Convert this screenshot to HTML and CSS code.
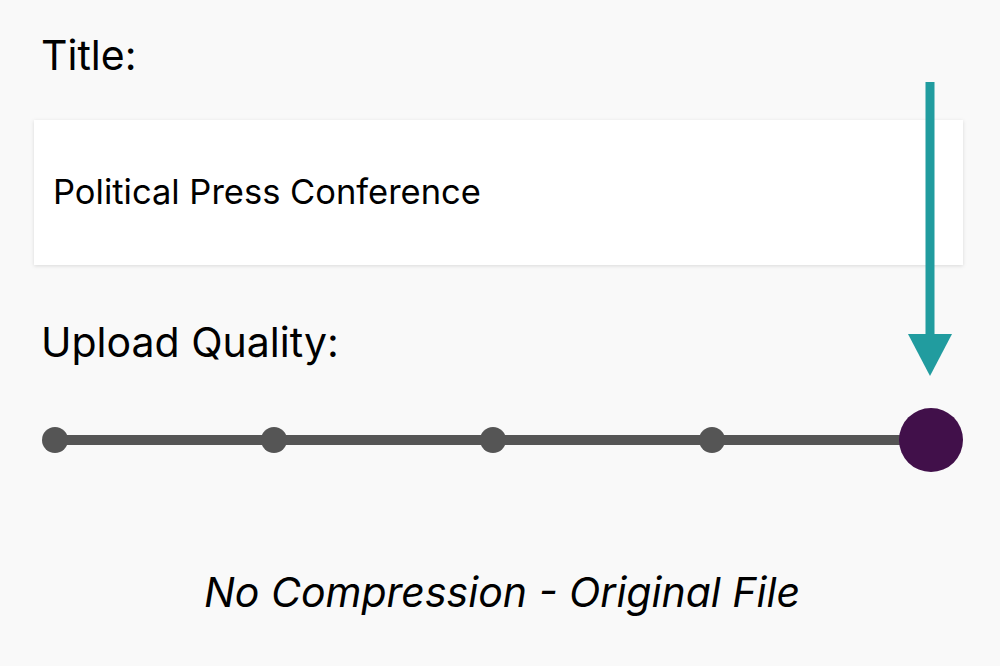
FILE: index.html
```html
<!DOCTYPE html>
<html>
<head>
<meta charset="utf-8">
<link rel="stylesheet" href="styles.css">
</head>
<body>
<div class="screen">
  <div class="label title-label">Title:</div>
  <div class="field">Political Press Conference</div>
  <div class="label quality-label">Upload Quality:</div>
  <div class="slider">
    <div class="track"></div>
    <span class="stop"></span>
    <span class="stop"></span>
    <span class="stop"></span>
    <span class="stop"></span>
    <span class="stop last"><span class="thumb"></span></span>
  </div>
  <div class="caption">No Compression - Original File</div>
  <svg class="arrow" width="50" height="300" viewBox="0 0 50 300">
    <rect x="20.5" y="0" width="9" height="254" fill="#219c9f"/>
    <polygon points="3,252 47,252 25,294" fill="#219c9f"/>
  </svg>
</div>
</body>
</html>
```
FILE: styles.css
```css
html, body {
  margin: 0;
  padding: 0;
  background: #f9f9f9;
}
.screen {
  position: relative;
  width: 1000px;
  height: 666px;
  overflow: hidden;
  font-family: Inter, "Noto Sans", sans-serif;
  color: #000;
  display: flex;
  flex-direction: column;
}
.label {
  font-size: 41px;
  line-height: 48px;
  padding-left: 41px;
}
.title-label {
  margin-top: 31px;
}
.field {
  margin: 41px 37px 0 34px;
  height: 145px;
  box-sizing: border-box;
  background: #fff;
  box-shadow: 0 1px 4px rgba(0,0,0,0.13);
  display: flex;
  align-items: center;
  padding: 0 0 3px 19px;
  font-size: 34.5px;
}
.quality-label {
  margin-top: 53px;
}
.slider {
  position: relative;
  margin: 42px 56px 0 42px;
  height: 64px;
  display: flex;
  align-items: center;
  justify-content: space-between;
}
.track {
  position: absolute;
  left: 13px;
  right: 13px;
  top: 27px;
  height: 10px;
  background: #555555;
}
.stop {
  position: relative;
  width: 26px;
  height: 26px;
  border-radius: 50%;
  background: #555555;
  display: flex;
  align-items: center;
  justify-content: center;
}
.stop.last {
  background: transparent;
}
.thumb {
  flex: none;
  width: 64px;
  height: 64px;
  border-radius: 50%;
  background: #41104a;
}
.caption {
  margin-top: 96px;
  text-align: center;
  font-style: italic;
  font-size: 41px;
  line-height: 48px;
  padding-left: 4px;
}
.arrow {
  position: absolute;
  left: 905px;
  top: 82px;
}
```
